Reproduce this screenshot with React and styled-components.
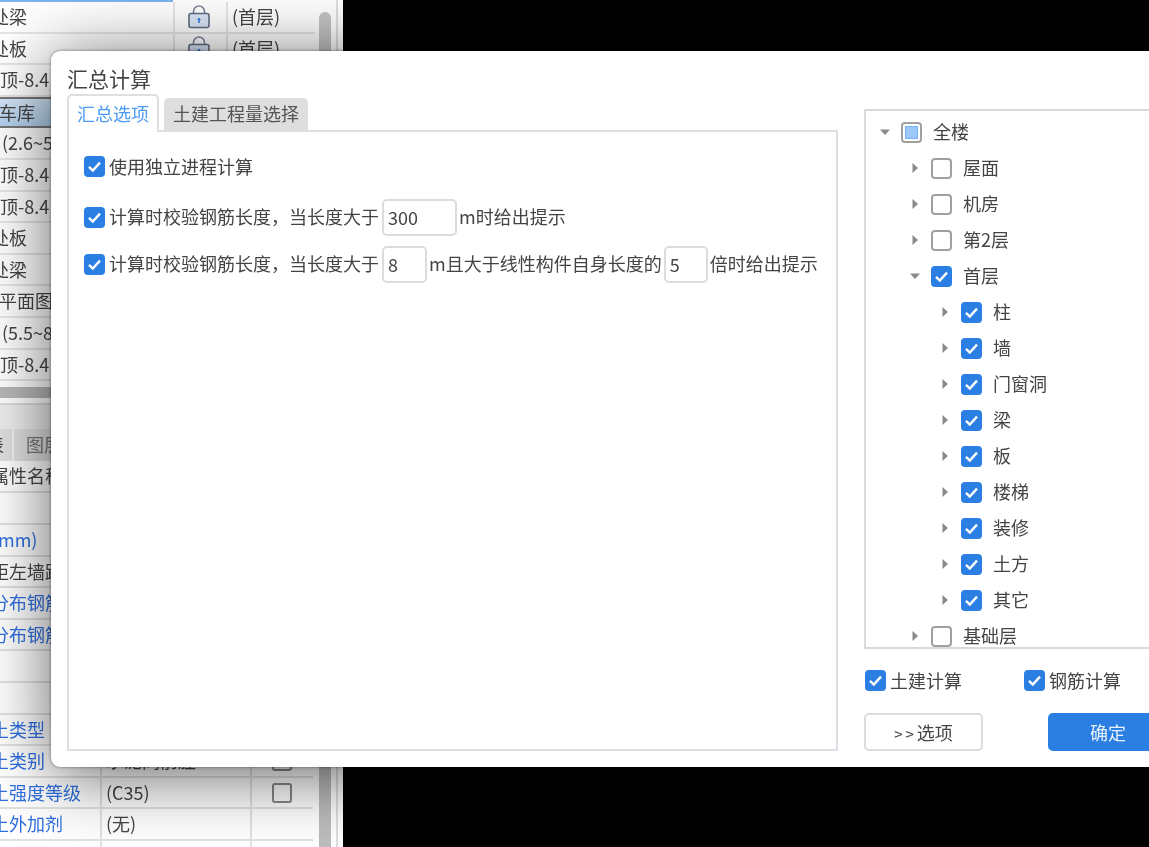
import React from "react";
import styled, { createGlobalStyle } from "styled-components";

const GlobalStyle = createGlobalStyle`
  html, body {
    margin: 0;
    height: 100%;
    overflow: hidden;
    background: #000;
  }
  body {
    font-family: "Noto Sans CJK SC", "Noto Sans", sans-serif;
    font-size: 18px;
    line-height: 1.2;
    color: #444;
  }
`;

const Screen = styled.div`
  position: relative;
  width: 1149px;
  height: 847px;
  overflow: hidden;
  background: #000;
  filter: blur(0.45px);
`;

const BackPanel = styled.div`
  width: 343px;
  height: 847px;
  background: #fff;
  display: flex;
  flex-direction: column;
  box-sizing: border-box;
`;

const TopArea = styled.div`
  display: flex;
  height: 387px;
  flex: none;
`;

const FloorList = styled.div`
  width: 315px;
  flex: none;
`;

const SelectedEdge = styled.div`
  width: 173px;
  height: 2px;
  background: #7db4ee;
`;

const FloorRow = styled.div`
  display: grid;
  grid-template-columns: 173px 53px 89px;
  height: 31.6px;
  box-sizing: border-box;
  border-bottom: 2px solid #e6e6e6;
  align-items: center;
  ${(p) =>
    p.$selected &&
    `
    background: linear-gradient(#d4e6f8, #b4d2f0);
    border-top: 2px solid #777;
    border-bottom: 2px solid #777;
  `}
`;

const NameCell = styled.div`
  overflow: hidden;
  white-space: nowrap;
`;

const NameText = styled.span`
  display: inline-block;
  margin-left: ${(p) => p.$shift || 0}px;
  color: ${(p) => (p.$link ? "#2e6fe0" : "#444")};
`;

const LockCell = styled.div`
  display: flex;
  justify-content: center;
  border-left: 2px solid #e6e6e6;
  padding-right: 3px;
  height: 100%;
  align-items: center;
  box-sizing: border-box;
`;

const FloorCell = styled.div`
  padding-left: 4px;
  border-left: 2px solid #e6e6e6;
  height: 100%;
  display: flex;
  align-items: center;
  box-sizing: border-box;
`;

const ScrollTrack = styled.div`
  width: 23px;
  flex: none;
  padding-left: 4px;
  box-sizing: border-box;
  border-right: 2px solid #dedede;
`;

const ScrollThumb = styled.div`
  width: 12px;
  height: 340px;
  margin-top: 12px;
  border-radius: 6px;
  background: #c4c4c4;
`;

const HorizontalBar = styled.div`
  height: 11px;
  flex: none;
  background: #b8b8b8;
`;

const Separator = styled.div`
  height: 26px;
  margin-top: 5px;
  flex: none;
  background: #eeeeee;
  border-top: 2px solid #dcdcdc;
  box-sizing: border-box;
`;

const TabStrip = styled.div`
  height: 32px;
  flex: none;
  display: flex;
  background: #e0e0e0;
  box-sizing: border-box;
`;

const BackTab = styled.div`
  width: ${(p) => p.$width}px;
  flex: none;
  overflow: hidden;
  border-right: 2px solid #f2f2f2;
  box-sizing: border-box;
  padding-left: ${(p) => p.$pad || 0}px;
  color: #777;
  line-height: 31px;
  white-space: nowrap;
`;

const PropArea = styled.div`
  display: flex;
  flex: 1;
  min-height: 0;
`;

const PropTable = styled.div`
  width: 313px;
  flex: none;
`;

const PropRow = styled.div`
  display: grid;
  grid-template-columns: 100px 150px 62px;
  height: ${(p) => p.$height || 31.6}px;
  box-sizing: border-box;
  border-bottom: 2px solid #e2e2e2;
  align-items: center;
`;

const PropCell = styled.div`
  height: 100%;
  display: flex;
  align-items: center;
  justify-content: ${(p) => (p.$center ? "center" : "flex-start")};
  padding-left: ${(p) => p.$pad || 0}px;
  border-left: ${(p) => (p.$first ? "0" : "2px solid #e2e2e2")};
  box-sizing: border-box;
  overflow: ${(p) => (p.$first ? "visible" : "hidden")};
  white-space: nowrap;
`;

const PropTrack = styled.div`
  width: 25px;
  flex: none;
  padding-left: 6px;
  box-sizing: border-box;
  display: flex;
  border-right: 2px solid #dedede;
`;

const PropThumb = styled.div`
  width: 12px;
  background: #bdbdbd;
`;

const SmallBox = styled.span`
  width: 20px;
  height: 20px;
  border: 2px solid #888;
  border-radius: 3px;
  box-sizing: border-box;
`;

const Dialog = styled.div`
  position: absolute;
  left: 51px;
  top: 51px;
  width: 1200px;
  height: 716px;
  box-sizing: border-box;
  background: #fff;
  border-radius: 9px;
  box-shadow: 0 8px 70px rgba(0, 0, 0, 0.62), 0 0 3px rgba(0, 0, 0, 0.5);
  padding: 14px 0 16px 16px;
  display: flex;
  gap: 26px;
`;

const LeftColumn = styled.div`
  width: 771px;
  flex: none;
  display: flex;
  flex-direction: column;
`;

const Title = styled.div`
  font-size: 21px;
  line-height: 27px;
  height: 29px;
  color: #444;
`;

const Tabs = styled.div`
  display: flex;
  align-items: flex-end;
  gap: 5px;
  position: relative;
  margin-bottom: -2px;
  z-index: 1;
`;

const Tab = styled.div`
  box-sizing: border-box;
  border-radius: 5px 5px 0 0;
  text-align: center;
  ${(p) =>
    p.$active
      ? `
    width: 92px;
    height: 38px;
    line-height: 34px;
    color: #4c9bf5;
    background: #fff;
    border: 2px solid #dcdfe3;
    border-bottom: 0;
  `
      : `
    width: 144px;
    height: 32px;
    line-height: 30px;
    color: #555;
    background: #dedede;
    margin-bottom: 2px;
  `}
`;

const OptionsPanel = styled.div`
  flex: 1;
  border: 2px solid #dcdfe3;
  padding: 24px 0 0 15px;
  display: flex;
  flex-direction: column;
`;

const OptionRow = styled.div`
  display: flex;
  align-items: center;
  gap: 3px;
  margin-top: ${(p) => p.$top || 0}px;
  white-space: nowrap;
`;

const OptionCheck = styled.span`
  display: inline-flex;
  margin-right: 1px;
`;

const TailText = styled.span`
  margin-left: -1px;
`;

const NumberBox = styled.div`
  box-sizing: border-box;
  width: ${(p) => p.$width}px;
  height: 37px;
  margin-left: ${(p) => p.$pull || 0}px;
  border: 2px solid #dcdcdc;
  border-radius: 5px;
  padding-left: 4px;
  line-height: 33px;
  color: #444;
`;

const CheckSquare = styled.span`
  width: 21px;
  height: 21px;
  flex: none;
  box-sizing: border-box;
  border-radius: 4px;
  display: inline-flex;
  align-items: center;
  justify-content: center;
  background: ${(p) => (p.$state === "on" ? "#2b7fe3" : "#fff")};
  border: ${(p) => (p.$state === "on" ? "0" : "2px solid #a0a0a0")};
`;

const PartialFill = styled.span`
  width: 13px;
  height: 13px;
  background: #9cc8fb;
  border: 1px solid #6fb0f8;
  box-sizing: border-box;
`;

const RightColumn = styled.div`
  width: 320px;
  flex: none;
  display: flex;
  flex-direction: column;
  padding-top: 44px;
`;

const TreeBox = styled.div`
  height: 540px;
  box-sizing: border-box;
  border: 2px solid #dadada;
  padding-top: 3px;
  overflow: hidden;
`;

const TreeRow = styled.div`
  display: flex;
  align-items: center;
  height: 36px;
  padding-left: ${(p) => 14 + p.$level * 30}px;
  flex: none;
`;

const ArrowSlot = styled.span`
  width: 21px;
  flex: none;
  display: flex;
  justify-content: flex-start;
`;

const TreeLabel = styled.span`
  margin-left: 11px;
  white-space: nowrap;
`;

const ModeRow = styled.div`
  display: flex;
  margin-top: 21px;
  padding-left: 1px;
`;

const ModeItem = styled.div`
  width: 159px;
  flex: none;
  display: flex;
  align-items: center;
  gap: 4px;
`;

const ButtonRow = styled.div`
  display: flex;
  margin-top: 21px;
  gap: 65px;
`;

const OutlineButton = styled.div`
  width: 119px;
  height: 38px;
  box-sizing: border-box;
  border: 2px solid #dcdcdc;
  border-radius: 5px;
  text-align: center;
  line-height: 34px;
`;

const Chevrons = styled.span`
  font-size: 15px;
  letter-spacing: 3px;
`;

const PrimaryButton = styled.div`
  width: 120px;
  height: 38px;
  background: #2b7fe3;
  color: #e8f2fd;
  border-radius: 5px;
  text-align: center;
  line-height: 38px;
`;

function LockIcon() {
  return (
    <svg width="22" height="24" viewBox="0 0 22 24">
      <path d="M5.5 9V6.5a5.5 5.5 0 0 1 11 0V9" fill="none" stroke="#7b8597" strokeWidth="1.6" />
      <rect x="1" y="8.5" width="20" height="14" rx="2" fill="#dbe6f7" stroke="#5f6b80" strokeWidth="1.6" />
      <path d="M11 12.5l2 2.4h-1.2V18h-1.6v-3.1H9z" fill="#2e7ce0" />
    </svg>
  );
}

function Tick() {
  return (
    <svg width="15" height="13" viewBox="0 0 15 13">
      <path d="M2 6.8l3.8 3.8L13 2.6" fill="none" stroke="#fff" strokeWidth="2.4" />
    </svg>
  );
}

function Check({ state = "on" }) {
  return (
    <CheckSquare $state={state}>
      {state === "on" && <Tick />}
      {state === "partial" && <PartialFill />}
    </CheckSquare>
  );
}

function Arrow({ open }) {
  return (
    <svg width="10" height="10" viewBox="0 0 10 10">
      <path d={open ? "M0 2.5h10L5 8z" : "M2.5 0v10L8 5z"} fill="#8a8a8a" />
    </svg>
  );
}

const floorRows = [
  { name: "处梁", shift: -9, lock: true, floor: "(首层)" },
  { name: "处板", shift: -9, lock: true, floor: "(首层)" },
  { name: "顶-8.4", shift: 0 },
  { name: "车库", shift: -1, selected: true },
  { name: "(2.6~5", shift: 2 },
  { name: "顶-8.4", shift: 0 },
  { name: "顶-8.4", shift: 0 },
  { name: "处板", shift: -9 },
  { name: "处梁", shift: -9 },
  { name: "平面图", shift: -1 },
  { name: "(5.5~8", shift: 2 },
  { name: "顶-8.4", shift: 0 },
];

const propRows = [
  { name: "属性名称", shift: -9, height: 32 },
  { name: "", height: 32 },
  { name: "mm)", shift: -2, link: true },
  { name: "距左墙距", shift: -9 },
  { name: "分布钢筋", shift: -9, link: true },
  { name: "分布钢筋", shift: -9, link: true },
  { name: "" },
  { name: "" },
  { name: "土类型", shift: -9, link: true },
  { name: "土类别", shift: -9, link: true, value: "水泥同前胫", box: true },
  { name: "土强度等级", shift: -9, link: true, value: "(C35)", box: true },
  { name: "土外加剂", shift: -9, link: true, value: "(无)" },
  { name: "" },
];

const treeRows = [
  { label: "全楼", level: 0, open: true, state: "partial" },
  { label: "屋面", level: 1, state: "off" },
  { label: "机房", level: 1, state: "off" },
  { label: "第2层", level: 1, state: "off" },
  { label: "首层", level: 1, open: true, state: "on" },
  { label: "柱", level: 2, state: "on" },
  { label: "墙", level: 2, state: "on" },
  { label: "门窗洞", level: 2, state: "on" },
  { label: "梁", level: 2, state: "on" },
  { label: "板", level: 2, state: "on" },
  { label: "楼梯", level: 2, state: "on" },
  { label: "装修", level: 2, state: "on" },
  { label: "土方", level: 2, state: "on" },
  { label: "其它", level: 2, state: "on" },
  { label: "基础层", level: 1, state: "off" },
];

function App() {
  return (
    <Screen>
      <GlobalStyle />
      <BackPanel>
        <TopArea>
          <FloorList>
            <SelectedEdge />
            {floorRows.map((row, i) => (
              <FloorRow key={i} $selected={row.selected}>
                <NameCell>
                  <NameText $shift={row.shift}>{row.name}</NameText>
                </NameCell>
                <LockCell>{row.lock && <LockIcon />}</LockCell>
                <FloorCell>{row.floor}</FloorCell>
              </FloorRow>
            ))}
          </FloorList>
          <ScrollTrack>
            <ScrollThumb />
          </ScrollTrack>
        </TopArea>
        <HorizontalBar />
        <Separator />
        <TabStrip>
          <BackTab $width={14}>
            <NameText $shift={-14}>表</NameText>
          </BackTab>
          <BackTab $width={100} $pad={12}>图层</BackTab>
        </TabStrip>
        <PropArea>
          <PropTable>
            {propRows.map((row, i) => (
              <PropRow key={i} $height={row.height}>
                <PropCell $first>
                  <NameText $shift={row.shift} $link={row.link}>{row.name}</NameText>
                </PropCell>
                <PropCell $pad={4}>{row.value}</PropCell>
                <PropCell $center>{row.box && <SmallBox />}</PropCell>
              </PropRow>
            ))}
          </PropTable>
          <PropTrack>
            <PropThumb />
          </PropTrack>
        </PropArea>
      </BackPanel>

      <Dialog>
        <LeftColumn>
          <Title>汇总计算</Title>
          <Tabs>
            <Tab $active>汇总选项</Tab>
            <Tab>土建工程量选择</Tab>
          </Tabs>
          <OptionsPanel>
            <OptionRow>
              <OptionCheck>
                <Check />
              </OptionCheck>
              <span>使用独立进程计算</span>
            </OptionRow>
            <OptionRow $top={21}>
              <OptionCheck>
                <Check />
              </OptionCheck>
              <span>计算时校验钢筋长度，当长度大于</span>
              <NumberBox $width={75}>300</NumberBox>
              <TailText>m时给出提示</TailText>
            </OptionRow>
            <OptionRow $top={10}>
              <OptionCheck>
                <Check />
              </OptionCheck>
              <span>计算时校验钢筋长度，当长度大于</span>
              <NumberBox $width={45}>8</NumberBox>
              <TailText>m且大于线性构件自身长度的</TailText>
              <NumberBox $width={44} $pull={-1}>5</NumberBox>
              <TailText>倍时给出提示</TailText>
            </OptionRow>
          </OptionsPanel>
        </LeftColumn>

        <RightColumn>
          <TreeBox>
            {treeRows.map((row) => (
              <TreeRow key={row.label} $level={row.level}>
                <ArrowSlot>
                  <Arrow open={row.open} />
                </ArrowSlot>
                <Check state={row.state} />
                <TreeLabel>{row.label}</TreeLabel>
              </TreeRow>
            ))}
          </TreeBox>
          <ModeRow>
            <ModeItem>
              <Check />
              <span>土建计算</span>
            </ModeItem>
            <ModeItem>
              <Check />
              <span>钢筋计算</span>
            </ModeItem>
          </ModeRow>
          <ButtonRow>
            <OutlineButton>
              <Chevrons>&gt;&gt;</Chevrons>选项
            </OutlineButton>
            <PrimaryButton>确定</PrimaryButton>
          </ButtonRow>
        </RightColumn>
      </Dialog>
    </Screen>
  );
}

export default App;
